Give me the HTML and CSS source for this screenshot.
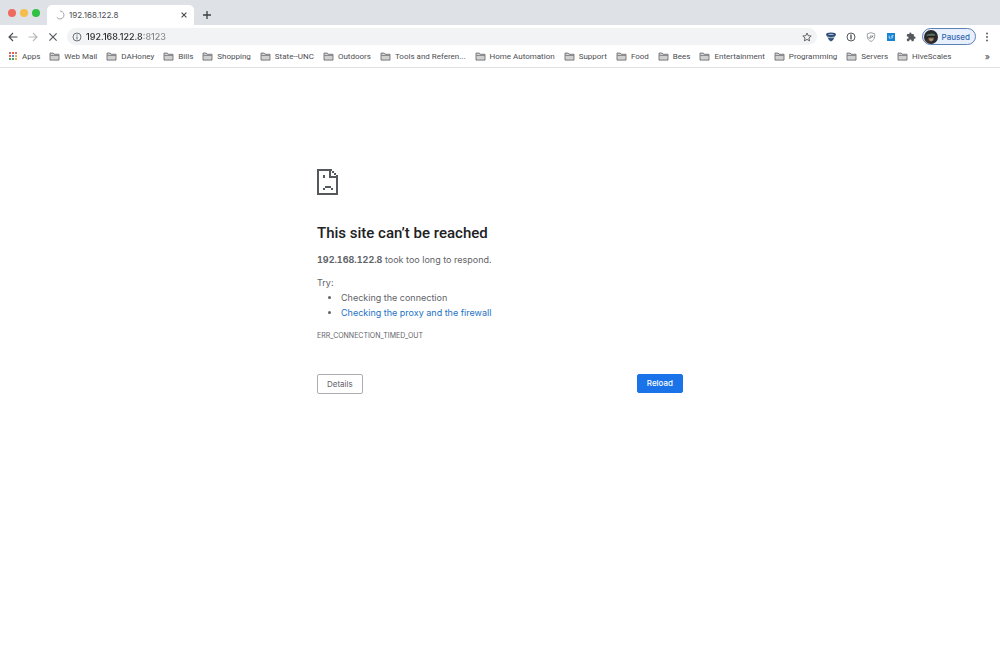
FILE: index.html
```html
<!DOCTYPE html>
<html lang="en">
<head>
<meta charset="utf-8">
<meta name="viewport" content="width=device-width, initial-scale=1">
<title>192.168.122.8</title>
<link rel="stylesheet" href="styles.css">
</head>
<body>
<svg class="sprite" aria-hidden="true">
  <symbol id="folder" viewBox="0 0 12 10">
    <path d="M1 9V1.2h3.6l1 1.3H11V9z" fill="#d0d0d1" stroke="#606367" stroke-width=".9"/>
    <path d="M1.4 3.9h9.2" stroke="#606367" stroke-width=".7"/>
  </symbol>
</svg>
<header class="browser">
  <div class="tab-strip">
    <div class="lights">
      <button class="light red" aria-label="Close window"></button>
      <button class="light yellow" aria-label="Minimize window"></button>
      <button class="light green" aria-label="Zoom window"></button>
    </div>
    <div class="tab">
      <svg class="icon-10" viewBox="0 0 10 10" fill="none"><path d="M5 1a4 4 0 1 1-3.2 6.4" stroke="#a2a5a9"/></svg>
      <span class="tab-title">192.168.122.8</span>
      <button class="icon-button" aria-label="Close tab"><svg class="icon-8" viewBox="0 0 8 8"><path d="M1.6 1.6l4.8 4.8M6.4 1.6L1.6 6.4" stroke="#45484c" stroke-width="1.1"/></svg></button>
    </div>
    <button class="icon-button new-tab" aria-label="New tab"><svg class="icon-10" viewBox="0 0 10 10"><path d="M5 1v8M1 5h8" stroke="#3c4043" stroke-width="1.3"/></svg></button>
  </div>
  <div class="toolbar">
    <div class="nav-buttons">
      <button class="icon-button" aria-label="Back"><svg class="icon-10" viewBox="0 0 10 10" fill="none" stroke="#46494d" stroke-width="1.1"><path d="M9.4 5H1.2M5 1L1 5l4 4"/></svg></button>
      <button class="icon-button" aria-label="Forward"><svg class="icon-10" viewBox="0 0 10 10" fill="none" stroke="#b5b7ba" stroke-width="1.1"><path d="M.6 5h8.2M5 1l4 4-4 4"/></svg></button>
      <button class="icon-button" aria-label="Stop"><svg class="icon-10" viewBox="0 0 10 10" stroke="#505357" stroke-width="1.1"><path d="M1.4 1.4l7.2 7.2M8.6 1.4L1.4 8.6"/></svg></button>
    </div>
    <div class="omnibox">
      <svg class="icon-10" viewBox="0 0 10 10" fill="none" stroke="#5f6368"><circle cx="5" cy="5" r="4" stroke-width=".9"/><path d="M5 4.4v3M5 2.5v1.1"/></svg>
      <input class="address" type="text" value="192.168.122.8:8123" aria-label="Address">
      <button class="icon-button" aria-label="Bookmark this page"><svg class="icon-10" viewBox="0 0 10 10" fill="none" stroke="#54575b" stroke-width=".9"><path d="M5 1l1.2 2.7 3 .3-2.3 2 .7 2.9L5 7.4 2.4 8.9 3.1 6 .8 4l3-.3z"/></svg></button>
    </div>
    <div class="extensions">
      <button class="icon-button" aria-label="Shield extension"><svg class="icon-10" viewBox="0 0 10 10"><path d="M0 2.5Q0 .5 5 .5t5 2L8.8 5Q5 6.8 1.2 5z" fill="#304b76"/><path d="M1.6 2.4Q5 .9 8.4 2.4 5 3.8 1.6 2.4" fill="#9eb8da"/><path d="M1.6 5.2Q5 7 8.4 5.2 8 7.6 5 9.6 2 7.6 1.6 5.2z" fill="#35557f"/><path d="M1.1 4.8Q5 6.8 8.9 4.8" stroke="#dbe4f0" stroke-width=".7" fill="none"/></svg></button>
      <button class="icon-button" aria-label="Password extension"><svg class="icon-10" viewBox="0 0 10 10" fill="none"><circle cx="5" cy="5" r="4" stroke="#55585c"/><path d="M5 2.5v5" stroke="#55585c" stroke-width="1.4"/></svg></button>
      <button class="icon-button" aria-label="Privacy extension"><svg class="icon-10" viewBox="0 0 10 10" fill="none" stroke="#888b8e" stroke-width=".8"><path d="M5 .7l3.7 1.1v2.6C8.7 7 7 8.6 5 9.5 3 8.6 1.3 7 1.3 4.4V1.8z"/><path d="M3 4.8a1 1 0 1 0 1.6 0V3.5M5.3 5.6L7 3.4M5.8 3.6l1.4 2" stroke="#696c70"/></svg></button>
      <button class="icon-button" aria-label="Link extension"><svg class="icon-10" viewBox="0 0 10 10"><path d="M1 1h8v8H1z" fill="#1683d3"/><path d="M3.2 3.6v2.6h1.5M5.9 6.5V3.6h1.6M5.9 5h1.2" stroke="#d9efff" stroke-width=".8" fill="none"/></svg></button>
      <button class="icon-button" aria-label="Extensions"><svg class="icon-10" viewBox="0 0 24 24" fill="#55585c"><path d="M20.5 11H19V7c0-1.1-.9-2-2-2h-4V3.5a2.5 2.5 0 0 0-5 0V5H4c-1.1 0-2 .9-2 2v3.8h1.5a2.7 2.7 0 0 1 0 5.4H2V20c0 1.1.9 2 2 2h3.8v-1.5a2.7 2.7 0 0 1 5.4 0V22H17c1.1 0 2-.9 2-2v-4h1.5a2.5 2.5 0 0 0 0-5z"/></svg></button>
    </div>
    <button class="profile">
      <svg class="avatar" viewBox="0 0 14 14"><circle cx="7" cy="7" r="7" fill="#28292a"/><path d="M2.3 5.1Q6.5 2.5 11 4.2v1.6L4.5 7.2z" fill="#57705d"/><path d="M4.2 6.2h6l-.7 4-2.7 1.5-2.2-2z" fill="#8b6a50"/><path d="M3.7 5.9h7v1.6h-7z" fill="#17191b"/><path d="M5 9.2q2-1.1 4.2 0l-1 1.6H6z" fill="#a8937f"/><path d="M1.3 10l3-.8 2 4.2q-3-.3-5-3.4" fill="#47332a"/></svg>
      <span>Paused</span>
    </button>
    <button class="icon-button menu" aria-label="Menu"><svg class="icon-10" viewBox="0 0 10 10" fill="#505357"><circle cx="5" cy="1.5" r=".9"/><circle cx="5" cy="5" r=".9"/><circle cx="5" cy="8.5" r=".9"/></svg></button>
  </div>
  <nav class="bookmarks" aria-label="Bookmarks">
    <a href="#" class="bookmark"><svg class="apps" viewBox="0 0 10 10"><path d="M1 1h2v2H1zM1 4h2v2H1z" fill="#dd6558"/><path d="M4 1h2v2H4z" fill="#dd6558"/><path d="M7 1h2v2H7z" fill="#d9735e"/><path d="M4 4h2v2H4z" fill="#5688d8"/><path d="M7 4h2v2H7zM7 7h2v2H7z" fill="#dfb253"/><path d="M1 7h2v2H1zM4 7h2v2H4z" fill="#529c66"/></svg>Apps</a>
    <a href="#" class="bookmark"><svg class="folder"><use href="#folder"/></svg>Web Mail</a>
    <a href="#" class="bookmark"><svg class="folder"><use href="#folder"/></svg>DAHoney</a>
    <a href="#" class="bookmark"><svg class="folder"><use href="#folder"/></svg>Bills</a>
    <a href="#" class="bookmark"><svg class="folder"><use href="#folder"/></svg>Shopping</a>
    <a href="#" class="bookmark"><svg class="folder"><use href="#folder"/></svg>State--UNC</a>
    <a href="#" class="bookmark"><svg class="folder"><use href="#folder"/></svg>Outdoors</a>
    <a href="#" class="bookmark"><svg class="folder"><use href="#folder"/></svg>Tools and Referen...</a>
    <a href="#" class="bookmark"><svg class="folder"><use href="#folder"/></svg>Home Automation</a>
    <a href="#" class="bookmark"><svg class="folder"><use href="#folder"/></svg>Support</a>
    <a href="#" class="bookmark"><svg class="folder"><use href="#folder"/></svg>Food</a>
    <a href="#" class="bookmark"><svg class="folder"><use href="#folder"/></svg>Bees</a>
    <a href="#" class="bookmark"><svg class="folder"><use href="#folder"/></svg>Entertainment</a>
    <a href="#" class="bookmark"><svg class="folder"><use href="#folder"/></svg>Programming</a>
    <a href="#" class="bookmark"><svg class="folder"><use href="#folder"/></svg>Servers</a>
    <a href="#" class="bookmark"><svg class="folder"><use href="#folder"/></svg>HiveScales</a>
    <button class="more" aria-label="More bookmarks">»</button>
  </nav>
</header>
<main class="error-page">
  <svg class="sad-page" viewBox="0 0 21 26" fill="#55585c" aria-hidden="true"><path d="M0 0h15v2h2v2h2v2h2v20H0zM2 2v22h17V9h-7V2zM14 2v5h5V6h-2V4h-2V2z" fill-rule="evenodd"/><path d="M6 6h2v3H6zM13 7h1v2h-1zM8 17h6v2H8zM6 19h2v2H6zM14 19h2v2h-2z"/></svg>
  <h1 class="title">This site can’t be reached</h1>
  <p class="summary"><strong>192.168.122.8</strong> took too long to respond.</p>
  <p class="try">Try:</p>
  <ul class="suggestions">
    <li>Checking the connection</li>
    <li><a href="#">Checking the proxy and the firewall</a></li>
  </ul>
  <p class="code">ERR_CONNECTION_TIMED_OUT</p>
  <div class="actions">
    <button class="button">Details</button>
    <button class="button primary">Reload</button>
  </div>
</main>
</body>
</html>
```
FILE: styles.css
```css
* { box-sizing: border-box; }
body { margin: 0; background: #fff; color: #5f6368; font-family: Inter, "Liberation Sans", sans-serif; font-size: 9px; }
button, input { font: inherit; border: 0; background: none; padding: 0; margin: 0; color: inherit; }
a { text-decoration: none; }
svg { display: block; flex: none; }
.sprite { position: absolute; width: 0; height: 0; }
.icon-10 { width: 10px; height: 10px; }
.icon-8 { width: 8px; height: 8px; }
.icon-button { display: flex; flex: none; }

.browser { border-bottom: 1px solid #dfe1e3; }
.tab-strip { display: flex; align-items: center; height: 25px; padding-left: 8px; background: #dee1e6; }
.lights { display: flex; gap: 4px; margin-right: 7px; }
.light { width: 8px; height: 8px; border-radius: 50%; }
.red { background: #ed6a5f; }
.yellow { background: #f4bd4e; }
.green { background: #2fc144; }
.tab { display: flex; align-items: center; gap: 4px; width: 147px; height: 20px; align-self: flex-end; padding: 0 6px 0 8px; border-radius: 5px 5px 0 0; background: #fff; color: #4b4e52; font-size: 8px; }
.tab-title { flex: 1; }
.new-tab { margin: 4px 0 0 8px; }

.toolbar { display: flex; align-items: center; height: 23px; padding: 0 8px; }
.nav-buttons { display: flex; gap: 10px; margin-right: 9px; }
.omnibox { display: flex; flex: 1; align-items: center; gap: 4px; height: 17px; padding: 0 5px; border-radius: 9px; background: #f1f3f4; }
.address { flex: 1; min-width: 0; font-size: 9px; font-weight: 500; outline: 0; color: transparent; background: linear-gradient(90deg, #292c30 57px, #82868a 57px); background-clip: text; -webkit-background-clip: text; }
.extensions { display: flex; gap: 10px; margin: 0 6px 0 9px; }
.extensions { margin: 0 6px 0 9px; }
.profile { display: flex; align-items: center; gap: 4px; height: 17px; padding: 0 5px 0 1px; border: 1px solid #5b82b5; border-radius: 9px; background: #e8f0fe; color: #3267ae; font-size: 8px; font-weight: 500; }
.avatar { width: 14px; height: 14px; }
.menu { margin-left: 6px; }

.bookmarks { display: flex; align-items: center; gap: 9px; height: 19px; padding: 0 10px 3px 8px; white-space: nowrap; overflow: hidden; }
.bookmark { display: flex; align-items: center; gap: 4px; color: #4b4e52; font-family: Roboto, Inter, sans-serif; font-size: 8px; }
.folder { width: 11px; height: 9px; }
.apps { width: 10px; height: 10px; }
.more { margin-left: auto; color: #3c4043; font-size: 9px; }

.error-page { width: 100%; max-width: 366px; margin: 0 auto; padding: 101px 0 24px; line-height: 15px; }
.sad-page { width: 21px; height: 26px; }
.title { margin: 28px 0 9px; color: #202124; font-family: Roboto, Inter, sans-serif; font-size: 15px; font-weight: 500; line-height: 20px; }
.summary { margin: 0 0 8px; }
.summary strong { font-variant-numeric: tabular-nums; }
.try { margin: 0; }
.suggestions { margin: 0; padding-left: 24px; }
.suggestions a { color: #2372c4; }
.code { margin: 8px 0 0; font-size: 7px; }
.actions { display: flex; justify-content: space-between; align-items: flex-start; margin-top: 31px; }
.button { height: 20px; padding: 0 9px; border: 1px solid #a9acb0; border-radius: 2px; font-size: 8px; }
.primary { height: 19px; border-color: #1a73e8; background: #1a73e8; color: #fff; font-weight: 500; }
```
